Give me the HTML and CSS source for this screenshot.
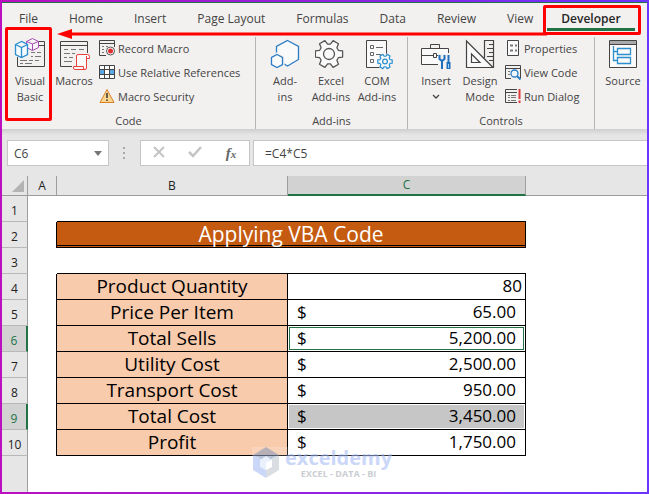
FILE: index.html
```html
<!DOCTYPE html>
<html lang="en">
<head>
    <meta charset="UTF-8">
    <meta name="viewport" content="width=device-width, initial-scale=1.0">
    <title>Applying VBA Code</title>
    <link rel="stylesheet" href="styles.css">
</head>
<body>
<div class="frame">
    <nav class="tabs">
        <a href="#">File</a>
        <a href="#">Home</a>
        <a href="#">Insert</a>
        <a href="#">Page Layout</a>
        <a href="#">Formulas</a>
        <a href="#">Data</a>
        <a href="#">Review</a>
        <a href="#">View</a>
        <a href="#" class="active">Developer
            <span class="mark mark-tab"></span>
            <svg class="arrow" width="490" height="10" viewBox="0 0 490 10"><path d="M0 5L15 0V10Z" fill="#f00"/><path d="M12 5H490" stroke="#f00" stroke-width="3"/></svg>
        </a>
    </nav>

    <div class="ribbon">
        <section class="group">
            <div class="tools">
                <button class="big">
                    <svg width="32" height="34" viewBox="0 0 32 34" fill="none">
                        <path d="M24 4.5H30.500V29.500H3.500V20" stroke="#444"/><path d="M24 8.500H30" stroke="#444"/>
                        <path d="M17 15.500h4m2 0h4M17 19.500h2m2 0h6M6 23.500h7m2 0h4m2 0h4M6 26.500h3m2 0h7" stroke="#777"/>
                        <path d="M12.500 4.500L18.500 1.500L24.500 4.500V10.500L18.500 13.500L12.500 10.500ZM12.500 4.500L18.500 7L24.500 4.500M18.500 7V13" fill="#faf5fb" stroke="#a44cb4"/>
                        <path d="M1.500 7.500L7.500 4.500L13.500 7.500V17.500L7.500 20.500L1.500 17.500ZM1.500 7.500L7.500 10.500L13.500 7.500M7.500 10.500V20" fill="#f5fafc" stroke="#2b8fd0" stroke-width="1.300"/>
                    </svg>
                    <span>Visual Basic</span>
                    <span class="mark mark-button"></span>
                </button>
                <button class="big">
                    <svg width="32" height="34" viewBox="0 0 32 34" fill="none">
                        <path d="M14 29.500H2.500V4.500H29.500V16M2.500 8.500H29.500" stroke="#444"/>
                        <path d="M6 12.500h4m3 0h5m3 0h5M6 16.500h6m2 0h3M6 20.500h3m2 0h4M6 24.500h8" stroke="#777"/>
                        <path d="M18.500 29V19Q18.500 17.500 20 17.500H29.500Q31.500 17.500 31.500 19.500V21.500H28.500V31Q28.500 32.500 27 32.500H17Q15.500 32.500 15.500 31V29.500H25.500V31Q25.500 32.500 27 32.500M28.500 21.500V19" fill="#fafafa" stroke="#e8403c"/>
                    </svg>
                    <span>Macros</span>
                </button>
                <div class="list">
                    <button class="small">
                        <svg width="16" height="16" viewBox="0 0 16 16" fill="none">
                            <path d="M7 15.500H.5V.5H15.500V7M.5 3.500H15.500" stroke="#444"/><path d="M3 6.500h2m2 0h2M3 9.500h2M3 12.500h2" stroke="#777"/>
                            <circle cx="11.500" cy="11" r="4" fill="#fff" stroke="#555"/><circle cx="11.500" cy="11" r="2.500" fill="#e03030"/>
                        </svg>
                        Record Macro
                    </button>
                    <button class="small">
                        <svg width="16" height="16" viewBox="0 0 16 16" fill="none">
                            <path d="M.5 1.500H15.500V14.500H.5Z" fill="#fff"/><path d="M1 5.500H5V10.500H1ZM11 5.500H15V10.500H11Z" fill="#5aa9e6"/>
                            <path d="M.5 1.500H15.500V14.500H.5ZM.5 5.500H15.500M.5 10.500H15.500M5.500 1.500V14.500M10.500 1.500V14.500" stroke="#444"/>
                        </svg>
                        Use Relative References
                    </button>
                    <button class="small">
                        <svg width="16" height="16" viewBox="0 0 16 16" fill="none">
                            <path d="M8 1.500L15 14.500H1Z" fill="#fbd68c" stroke="#d9822b" stroke-linejoin="round"/><path d="M8 5V10M8 11.500V13" stroke="#333" stroke-width="1.500"/>
                        </svg>
                        Macro Security
                    </button>
                </div>
            </div>
            <h2>Code</h2>
        </section>

        <section class="group">
            <div class="tools">
                <button class="big wide">
                    <svg width="32" height="34" viewBox="0 0 32 34" fill="none" stroke="#2b7cc4" stroke-width="1.300">
                        <path d="M18.500 3.500L29.500 9.500V22.500L18.500 29L7.500 22.500V9.500Z" fill="#fafafa"/>
                        <path d="M8 17.500L13.500 20.500V27.500L8 30.500L2.500 27.500V20.500Z" fill="#fafafa" stroke="#f3f1f0" stroke-width="4"/>
                        <path d="M8 17.500L13.500 20.500V27.500L8 30.500L2.500 27.500V20.500Z" fill="#fafafa"/>
                    </svg>
                    <span>Add-<br>ins</span>
                </button>
                <button class="big wide">
                    <svg width="32" height="34" viewBox="0 0 32 34" fill="none" stroke="#555" stroke-width="1.300">
                        <g transform="translate(14 17)">
                            <path id="gear" d="M9.300 -3.700L13.600 -3.100V3.100L9.300 3.700L7.900 6.200L9.500 10.200L4.100 13.400L1.400 9.900H-1.400L-4.100 13.400L-9.500 10.200L-7.900 6.200L-9.300 3.700L-13.600 3.100V-3.100L-9.300 -3.700L-7.900 -6.200L-9.500 -10.200L-4.100 -13.400L-1.400 -9.900H1.400L4.100 -13.400L9.500 -10.200L7.900 -6.200Z" fill="#fafafa" stroke-linejoin="round"/>
                            <circle r="5.500"/>
                        </g>
                    </svg>
                    <span>Excel Add-ins</span>
                </button>
                <button class="big wide">
                    <svg width="32" height="34" viewBox="0 0 32 34" fill="none">
                        <path d="M5.500 3.500H25.500V30.500H5.500Z" fill="#fafafa" stroke="#444"/>
                        <path d="M9.500 8.500h3v3h-3ZM9.500 15.500h3v3h-3ZM9.500 22.500h3v3h-3ZM15 10.500h7M15 17.500h5" stroke="#666"/>
                        <circle cx="24" cy="24.500" r="8" fill="#f3f1f0"/>
                        <g transform="translate(24 24.500) scale(.53)" stroke="#2b8fd0" stroke-width="2.300">
                            <use href="#gear"/>
                            <circle r="4.500"/>
                        </g>
                    </svg>
                    <span>COM Add-ins</span>
                </button>
            </div>
            <h2>Add-ins</h2>
        </section>

        <section class="group">
            <div class="tools">
                <button class="big">
                    <svg width="32" height="34" viewBox="0 0 32 34" fill="none">
                        <path d="M1.500 11.500H28.500V27.500H1.500Z" fill="#fafafa"/>
                        <path d="M28.500 16V11.500H1.500V27.500H18M10.500 11V7.500H19.500V11M1.500 18.500H13M17 18.500H19M13.500 16.500h3v4h-3Z" stroke="#444"/>
                        <path d="M18 17h14v16H20V25L18 23Z" fill="#f3f1f0"/>
                        <path d="M19.500 18v4l2.500 2 2.500-2v-4M22 24v8" stroke="#1f6fbf" stroke-width="2"/>
                        <path d="M28.500 18v8" stroke="#1f6fbf" stroke-width="2"/><path d="M28.500 25v7" stroke="#1f6fbf" stroke-width="4"/><path d="M28.500 27v4" stroke="#9fd0f5"/>
                    </svg>
                    <span>Insert</span>
                    <svg width="8" height="16" viewBox="0 0 8 16" fill="none"><path d="M1 6L4 9L7 6" stroke="#444" stroke-width="1.300"/></svg>
                </button>
                <button class="big">
                    <svg width="32" height="34" viewBox="0 0 32 34" fill="none" stroke="#444" stroke-width="1.200">
                        <path d="M20.500 21V3.500H29.500V30.500M25 7.500h4M23 11.500h6M25 15.500h4M23 19.500h6M25 23.500h4"/>
                        <path d="M2.500 4V30.500H29Z" fill="#fafafa"/><path d="M7.500 17V25.500H16Z"/>
                    </svg>
                    <span>Design Mode</span>
                </button>
                <div class="list">
                    <button class="small">
                        <svg width="16" height="16" viewBox="0 0 16 16" fill="none"><path d="M2.500.5H13.500V15.500H2.500Z" fill="#fafafa" stroke="#444"/><path d="M5 5.500h3m2 0h2M5 10.500h3m2 0h2" stroke="#777" stroke-width="2"/></svg>
                        Properties
                    </button>
                    <button class="small">
                        <svg width="16" height="16" viewBox="0 0 16 16" fill="none"><path d="M6 14.500H.5V1.500H15.500V14M.5 4.500H15.500" stroke="#444"/><path d="M3 7.500h2M3 10.500h2" stroke="#777"/><circle cx="9.500" cy="9.500" r="3.500" fill="#eef7fd" stroke="#2b7cc4" stroke-width="1.300"/><path d="M12 12L15.500 15.500" stroke="#2b7cc4" stroke-width="2"/></svg>
                        View Code
                    </button>
                    <button class="small">
                        <svg width="16" height="16" viewBox="0 0 16 16" fill="none"><path d="M12 14.500H.5V1.500H12M.5 4.500H12" stroke="#444"/><path d="M3 7.500h2m1 0h5M3 9.500h2m1 0h5M3 12.500h2m1 0h5" stroke="#777"/><path d="M14.500 1V11M14.500 12.500V15" stroke="#e03c3c" stroke-width="2"/></svg>
                        Run Dialog
                    </button>
                </div>
            </div>
            <h2>Controls</h2>
        </section>

        <section class="group">
            <div class="tools">
                <button class="big">
                    <svg width="32" height="34" viewBox="0 0 32 34" fill="none">
                        <path d="M2.500 3.500H29.500V30.500H2.500Z" fill="#fafafa" stroke="#444"/><path d="M3 4H29V7H3Z" fill="#aaa"/><path d="M2.500 7.500H29.500" stroke="#444"/>
                        <path d="M6.500 9V23.500H10M6.500 14.500H10M10.500 11.500H23.500V17.500H10.500ZM10.500 20.500H23.500V26.500H10.500Z" stroke="#2b8fd0" stroke-width="1.300"/>
                    </svg>
                    <span>Source</span>
                </button>
            </div>
        </section>
    </div>

    <div class="formula-bar">
        <div class="name-box">
            <input type="text" value="C6" aria-label="Name box">
            <svg width="8" height="5" viewBox="0 0 8 5"><path d="M0 0H8L4 5Z" fill="#777"/></svg>
        </div>
        <svg class="dots" width="3" height="12" viewBox="0 0 3 12" fill="#aaa"><path d="M0 0h2v2H0ZM0 5h2v2H0ZM0 10h2v2H0Z"/></svg>
        <div class="entry">
            <button aria-label="Cancel"><svg width="14" height="12" viewBox="0 0 14 12"><path d="M2 1L12 11M12 1L2 11" stroke="#c4c4c4" stroke-width="2"/></svg></button>
            <button aria-label="Enter"><svg width="14" height="12" viewBox="0 0 14 12"><path d="M1 6L5 10L13 1" fill="none" stroke="#c4c4c4" stroke-width="2.500"/></svg></button>
            <button class="fx">f<small>x</small></button>
        </div>
        <input class="formula" type="text" value="=C4*C5" aria-label="Formula">
    </div>

    <div class="sheet">
        <table>
            <colgroup><col class="col-num"><col class="col-a"><col class="col-b"><col class="col-c"><col></colgroup>
            <thead>
                <tr>
                    <th><svg width="12" height="12" viewBox="0 0 12 12"><path d="M12 0V12H0Z" fill="#b3b3b3"/></svg></th>
                    <th>A</th><th>B</th><th class="picked">C</th><th></th>
                </tr>
            </thead>
            <tbody>
                <tr class="over"><th>1</th><td></td><td></td><td></td><td></td></tr>
                <tr class="boxed"><th>2</th><td></td><td colspan="2" class="title">Applying VBA Code</td><td></td></tr>
                <tr class="over"><th>3</th><td></td><td></td><td></td><td></td></tr>
                <tr class="boxed"><th>4</th><td></td><td class="name">Product Quantity</td><td class="value"><div class="plain">80</div></td><td></td></tr>
                <tr class="boxed"><th>5</th><td></td><td class="name">Price Per Item</td><td class="value"><div><span>$</span><span>65.00</span></div></td><td></td></tr>
                <tr class="boxed"><th class="picked">6</th><td></td><td class="name">Total Sells</td><td class="value"><div class="current"><span>$</span><span>5,200.00</span></div></td><td></td></tr>
                <tr class="boxed"><th>7</th><td></td><td class="name">Utility Cost</td><td class="value"><div><span>$</span><span>2,500.00</span></div></td><td></td></tr>
                <tr class="boxed"><th>8</th><td></td><td class="name">Transport Cost</td><td class="value"><div><span>$</span><span>950.00</span></div></td><td></td></tr>
                <tr class="boxed"><th class="picked">9</th><td></td><td class="name">Total Cost</td><td class="value"><div class="selected"><span>$</span><span>3,450.00</span></div></td><td></td></tr>
                <tr class="boxed"><th>10</th><td></td><td class="name">Profit</td><td class="value"><div><span>$</span><span>1,750.00</span></div></td><td></td></tr>
                <tr class="rest"><th></th><td></td><td></td><td></td><td></td></tr>
            </tbody>
        </table>
        <div class="watermark">
            <svg width="28" height="32" viewBox="0 0 28 32">
                <path d="M14 0L27 8L14 15L1 8Z" fill="#8b9dc0"/><path d="M1 8L14 15V31L1 23Z" fill="#a9bdf5"/><path d="M27 8L14 15V31L27 23Z" fill="#c3c8d0"/>
                <path d="M14 9L20 13V20L14 23L8 20V13Z" fill="#dfe8fb"/><path d="M14 16L20 13V20L14 23Z" fill="#fff"/>
            </svg>
            <div><b>exceldemy</b><small>EXCEL - DATA - BI</small></div>
        </div>
    </div>
</div>
</body>
</html>
```
FILE: styles.css
```css
* {
    box-sizing: border-box;
}

body {
    margin: 0;
    font-family: "Open Sans", sans-serif;
    font-size: 11px;
    color: #444;
}

button, input {
    font: inherit;
    color: inherit;
    border: 0;
    padding: 0;
    background: none;
}

.frame {
    min-height: 100vh;
    padding: 2px;
    background: linear-gradient(to right, #bb0fc0, #6a35ff);
}

/* tabs */
.tabs {
    display: flex;
    gap: 31px;
    height: 34px;
    padding-left: 17px;
    border-top: 1px solid #217346;
    background-color: #f3f1f0;
    font-size: 12px;
    line-height: 31px;
}

.tabs a {
    color: #444;
    text-decoration: none;
    white-space: nowrap;
}

.tabs .active {
    position: relative;
    height: 28px;
    margin-left: -17px;
    padding: 0 14px;
    border-bottom: 3px solid #217346;
    color: #262626;
    font-weight: 600;
}

.mark {
    position: absolute;
    border: 3px solid #f00;
    border-radius: 2px;
}

.mark-tab {
    inset: 2px -6px -7px -4px;
}

.mark-button {
    inset: -10px 0 -8px -3px;
}

.arrow {
    position: absolute;
    right: 100%;
    top: 26px;
    z-index: 1;
}

/* ribbon */
.ribbon {
    display: grid;
    grid-template-columns: 254px 152px 187px 1fr;
    height: 93px;
    background-color: #f3f1f0;
}

.group {
    position: relative;
    padding-left: 6px;
    border-right: 1px solid #b5b5b5;
    margin: 1px 0 4px;
}

.group:last-child {
    border-right: 0;
}

.group h2 {
    margin: 0 0 0 -6px;
    font-size: 11px;
    font-weight: normal;
    line-height: 16px;
    text-align: center;
}

.tools {
    display: flex;
    height: 76px;
}

.big {
    position: relative;
    display: flex;
    flex-direction: column;
    align-items: center;
    gap: 2px;
    width: 44px;
    height: 76px;
    line-height: 16px;
}

.big > svg + span + svg {
    margin-top: -2px;
}

.wide {
    width: 46px;
}

.list {
    margin: -1px 0 0 3px;
}

.small {
    display: flex;
    align-items: center;
    gap: 3px;
    height: 24px;
    white-space: nowrap;
}

/* formula bar */
.formula-bar {
    display: flex;
    align-items: center;
    height: 47px;
    padding: 1px 0 0 5px;
    background: linear-gradient(#cfcfcf, #e6e6e6 6px);
    font-size: 12px;
}

.name-box, .entry, .formula {
    height: 26px;
    border: 1px solid #c6c6c6;
    background-color: #fff;
}

.name-box {
    display: flex;
    align-items: center;
    width: 102px;
    padding: 0 6px;
}

.name-box input {
    flex: 1;
    min-width: 0;
}

.dots {
    margin: 0 14px;
}

.entry {
    display: flex;
    width: 110px;
    margin-right: 3px;
}

.entry button {
    flex: 1;
}

.entry .fx {
    font: italic bold 15px "Liberation Serif", serif;
    color: #666;
}

.fx small {
    font-size: 11px;
}

.formula {
    flex: 1;
    min-width: 0;
    padding-left: 11px;
    border-right: 0;
}

/* sheet */
.sheet {
    position: relative;
    background-color: #fff;
}

table {
    width: 100%;
    table-layout: fixed;
    border-collapse: separate;
    border-spacing: 0;
}

.col-num {
    width: 26px;
}

.col-a {
    width: 29px;
}

.col-b {
    width: 231px;
}

.col-c {
    width: 238px;
}

th, td {
    height: 26px;
    padding: 0;
    line-height: 20px;
}

th {
    border-right: 1px solid #9e9e9e;
    border-bottom: 1px solid #b8b8b8;
    background-color: #e6e6e6;
    color: #222;
    font-size: 12px;
    font-weight: normal;
}

thead th {
    height: 20px;
    border-bottom-color: #9b9b9b;
    line-height: 18px;
}

thead th:first-child svg {
    display: block;
    margin-left: 10px;
}

thead th:last-child {
    border-right: 0;
}

tbody th {
    padding-top: 4px;
}

.picked {
    background-color: #d2d2d2;
    color: #217346;
}

thead .picked {
    border-bottom: 2px solid #217346;
}

tbody .picked {
    border-right: 2px solid #217346;
}

.over td:nth-child(3), .over td:nth-child(4) {
    border-bottom: 1px solid #000;
}

.boxed td:nth-child(2) {
    border-right: 1px solid #000;
}

.title {
    border-right: 1px solid #000;
    border-bottom: 3px double #000;
    background-color: #c55a11;
    color: #fff;
    font-size: 21px;
    text-align: center;
}

.name, .value {
    border-right: 1px solid #000;
    border-bottom: 1px solid #000;
    color: #000;
    font-size: 19px;
}

.name {
    padding-bottom: 2px;
    background-color: #f8cbad;
    text-align: center;
}

.value div {
    display: flex;
    justify-content: space-between;
    height: 23px;
    margin: 1px;
    padding: 0 7px;
    border: 1px solid transparent;
    font-size: 17px;
    line-height: 20px;
}

.value .plain {
    justify-content: flex-end;
    padding-right: 1px;
}

.value .current {
    border-color: #217346;
}

.value .selected {
    background-color: #c6c6c6;
}

.rest th, .rest td {
    height: 36px;
}

.rest th {
    border-bottom: 0;
}

.watermark {
    position: absolute;
    left: 250px;
    bottom: 13px;
    display: flex;
    gap: 5px;
    background-color: rgba(255, 255, 255, 0.3);
    opacity: 0.6;
}

.watermark div {
    display: flex;
    flex-direction: column;
    align-items: center;
}

.watermark b {
    color: #a9bdf5;
    font-size: 20px;
    line-height: 22px;
}

.watermark small {
    color: #a8adb3;
    font-size: 9px;
    font-weight: bold;
    line-height: 10px;
}
```
